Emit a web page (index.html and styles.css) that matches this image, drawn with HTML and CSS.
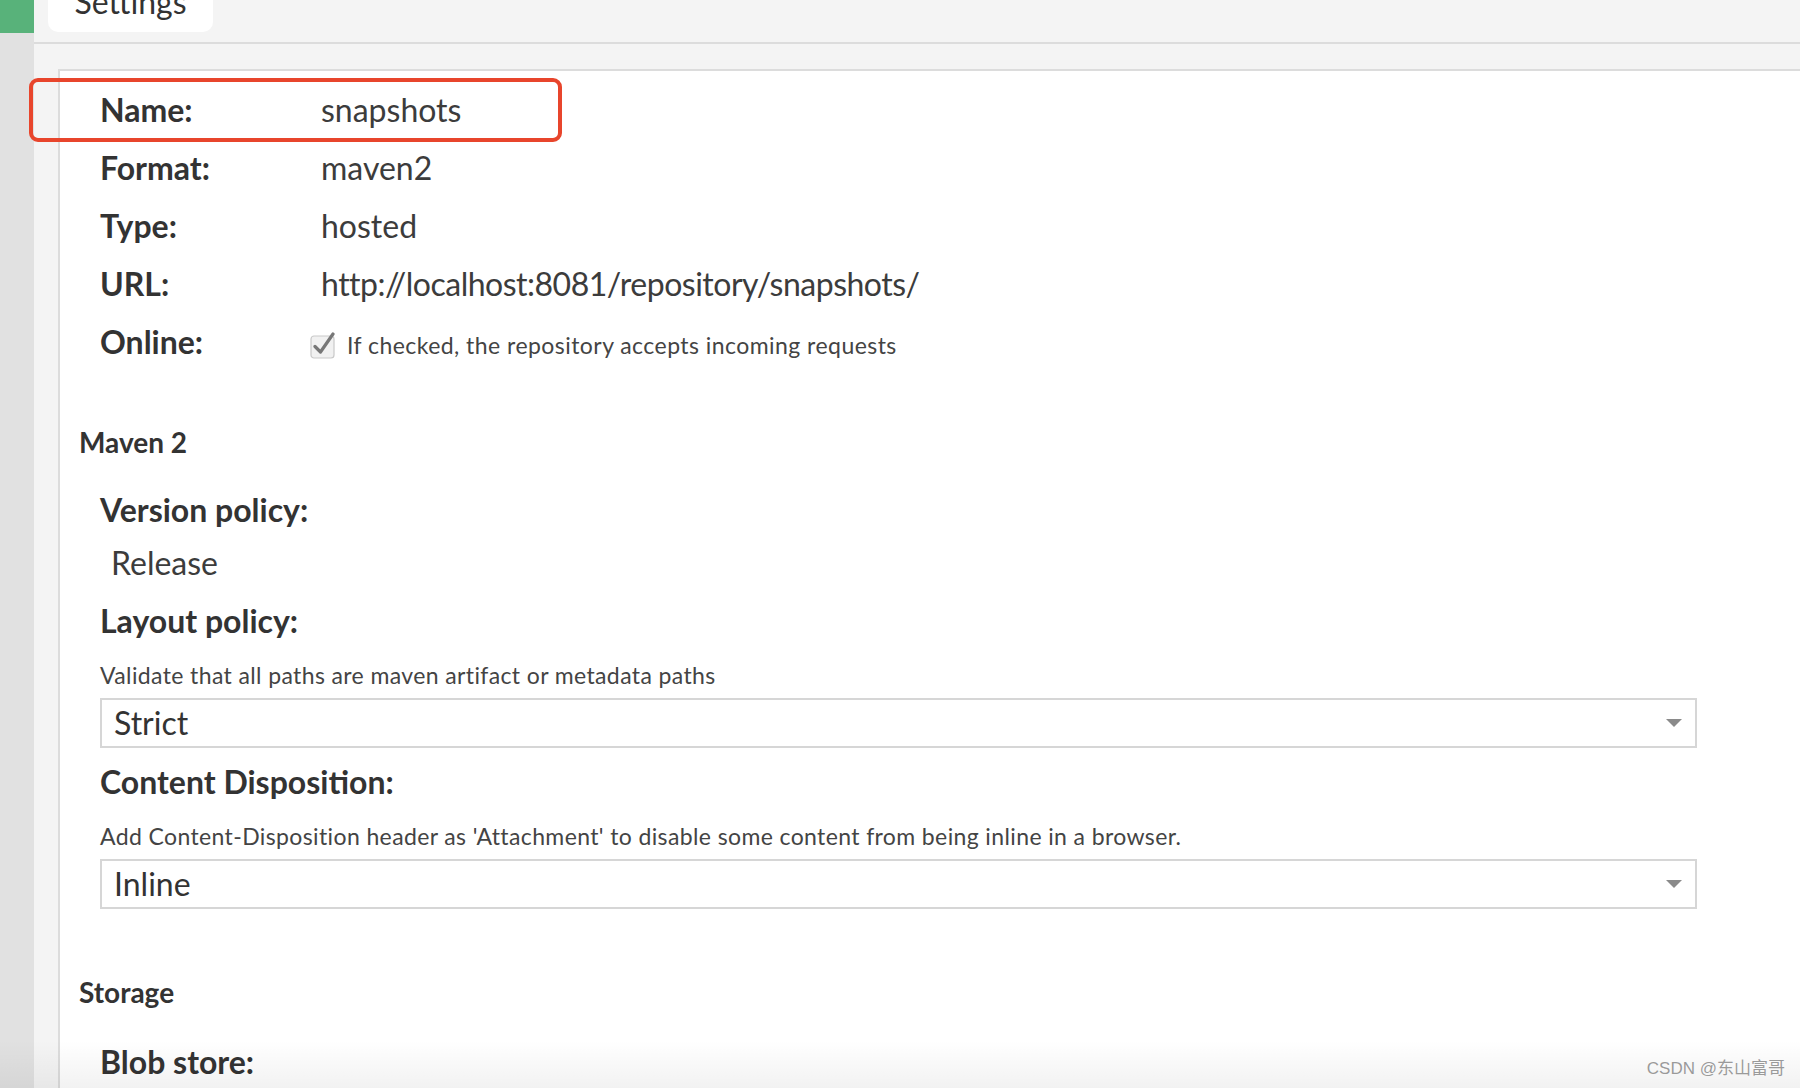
FILE: index.html
```html
<!DOCTYPE html>
<html lang="en">
<head>
<meta charset="utf-8">
<title>Repository settings - snapshots</title>
<link rel="stylesheet" href="styles.css">
</head>
<body>
<div class="app">
  <aside class="nav"><div class="nav-accent"></div></aside>
  <main class="main">
    <div class="tabbar"><div class="tab">Settings</div></div>
    <div class="content">
      <section class="panel">
        <div class="summary">
          <div class="row"><span class="label">Name:</span><span class="value">snapshots</span></div>
          <div class="row"><span class="label">Format:</span><span class="value">maven2</span></div>
          <div class="row"><span class="label">Type:</span><span class="value">hosted</span></div>
          <div class="row"><span class="label">URL:</span><span class="value url">http://localhost:8081/repository/snapshots/</span></div>
          <div class="row"><span class="label">Online:</span>
            <span class="value online">
              <svg class="checkbox" width="26" height="27" viewBox="0 0 26 27">
                <rect x="1" y="4" width="23" height="22" rx="3" fill="#f1f1f1" stroke="#c9c9c9" stroke-width="1.2"/>
                <path d="M5 14.5 L10.5 20 L23 2" fill="none" stroke="#777" stroke-width="3.2" stroke-linecap="round" stroke-linejoin="round"/>
              </svg>
              <span class="help-inline">If checked, the repository accepts incoming requests</span>
            </span>
          </div>
        </div>

        <h3 class="section-title maven">Maven 2</h3>
        <div class="fields">
          <div class="field-label version">Version policy:</div>
          <div class="field-value">Release</div>
          <div class="field-label layout">Layout policy:</div>
          <div class="help">Validate that all paths are maven artifact or metadata paths</div>
          <div class="select"><span class="select-text">Strict</span><span class="caret"></span></div>
          <div class="field-label disposition">Content Disposition:</div>
          <div class="help">Add Content-Disposition header as 'Attachment' to disable some content from being inline in a browser.</div>
          <div class="select second"><span class="select-text">Inline</span><span class="caret"></span></div>
        </div>

        <h3 class="section-title storage">Storage</h3>
        <div class="fields">
          <div class="field-label blob">Blob store:</div>
        </div>
      </section>
    </div>
  </main>
  <div class="highlight"></div>
  <div class="fade"></div>
  <div class="watermark">CSDN @东山富哥</div>
</div>
</body>
</html>
```
FILE: styles.css
```css
html, body {
  margin: 0;
  padding: 0;
  width: 1800px;
  height: 1088px;
  overflow: hidden;
  background: #f4f4f4;
  font-family: "Lato", "Open Sans", sans-serif;
  color: #333;
}

.app {
  position: relative;
  display: flex;
  width: 1800px;
  height: 1088px;
}

.nav {
  width: 34px;
  flex: none;
  background: #e1e1e1;
}

.nav-accent {
  height: 33px;
  background: #58b27a;
}

.main {
  flex: 1;
  display: flex;
  flex-direction: column;
  min-width: 0;
}

.tabbar {
  height: 42px;
  border-bottom: 2px solid #dcdcdc;
  background: #f4f4f4;
  padding-left: 14px;
}

.tab {
  width: 165px;
  height: 52px;
  margin-top: -20px;
  box-sizing: border-box;
  padding-top: 7px;
  background: #fff;
  border-radius: 0 0 10px 10px;
  text-align: center;
  font-size: 32px;
  line-height: 30px;
  color: #333;
}

.content {
  flex: 1;
  padding-top: 25px;
  padding-left: 24px;
}

.panel {
  height: 100%;
  background: #fff;
  border-top: 2px solid #dcdcdc;
  border-left: 2px solid #dcdcdc;
  padding-left: 19px;
  box-sizing: border-box;
}

.summary {
  padding-top: 10px;
  margin-left: 21px;
}

.row {
  display: grid;
  grid-template-columns: 221px 1fr;
  height: 58px;
  line-height: 58px;
  font-size: 32px;
  align-items: baseline;
}

.label {
  font-weight: 700;
  color: #333;
}

.value {
  color: #3c3c3c;
}

.value.url {
  letter-spacing: -0.5px;
}

.online {
  display: flex;
  align-items: baseline;
  margin-left: -11px;
}

.checkbox {
  align-self: center;
  margin-top: 1px;
  margin-right: 11px;
}

.help-inline {
  font-size: 23px;
  letter-spacing: 0.45px;
  color: #444;
}

.section-title {
  margin: 0;
  font-size: 28px;
  line-height: 36px;
  font-weight: 700;
  color: #333;
}

.section-title.maven {
  margin-top: 53px;
}

.section-title.storage {
  margin-top: 65px;
}

.fields {
  margin-left: 21px;
  margin-right: 103px;
}

.field-label {
  font-size: 32px;
  line-height: 40px;
  font-weight: 700;
  color: #333;
}

.field-label.version { margin-top: 30px; }
.field-label.layout { margin-top: 18px; }
.field-label.disposition { margin-top: 14px; }
.field-label.blob { margin-top: 32px; }

.field-value {
  margin-top: 13px;
  padding-left: 11px;
  font-size: 32px;
  line-height: 40px;
  color: #3c3c3c;
}

.help {
  margin-top: 19px;
  font-size: 23px;
  line-height: 30px;
  letter-spacing: 0.38px;
  color: #444;
}

.select {
  display: flex;
  align-items: center;
  justify-content: space-between;
  height: 50px;
  box-sizing: border-box;
  margin-top: 8px;
  border: 2px solid #d6d6d6;
  background: #fff;
  padding: 0 13px 0 12px;
}

.select.second {
  margin-top: 8px;
}

.select-text {
  font-size: 32px;
  line-height: 46px;
  color: #333;
}

.caret {
  width: 0;
  height: 0;
  border-left: 8px solid transparent;
  border-right: 8px solid transparent;
  border-top: 8px solid #8a8a8a;
}

.highlight {
  position: absolute;
  left: 29px;
  top: 78px;
  width: 533px;
  height: 64px;
  box-sizing: border-box;
  border: 4px solid #e8452c;
  border-radius: 9px;
  pointer-events: none;
}

.fade {
  position: absolute;
  left: 0;
  right: 0;
  bottom: 0;
  height: 48px;
  background: linear-gradient(to bottom, rgba(0, 0, 0, 0), rgba(0, 0, 0, 0.05));
  pointer-events: none;
}

.watermark {
  position: absolute;
  right: 15px;
  bottom: 8px;
  font-family: "Liberation Sans", "Noto Sans CJK SC", sans-serif;
  font-size: 17px;
  line-height: 22px;
  color: #9a9a9a;
  text-shadow: 0 0 1px #fff;
}
```
